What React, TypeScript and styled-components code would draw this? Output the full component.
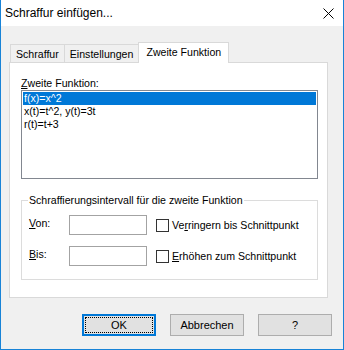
import React from "react";
import styled, { createGlobalStyle } from "styled-components";

const Global = createGlobalStyle`
  html, body { margin: 0; padding: 0; background: #ffffff; }
  * { box-sizing: border-box; }
`;

const Window = styled.div`
  width: 344px;
  height: 350px;
  border: 1px solid #1883d7;
  border-top: none;
  background: #f0f0f0;
  display: flex;
  flex-direction: column;
  font-family: "Liberation Sans", Arial, sans-serif;
  font-size: 10.6px;
  color: #000;
`;

const TitleBar = styled.div`
  height: 26px;
  background: #ffffff;
  display: flex;
  align-items: center;
  justify-content: space-between;
  padding-left: 4px;
  padding-right: 9px;
  flex-shrink: 0;
`;

const Title = styled.span`
  font-size: 12px;
  line-height: 14px;
  margin-top: -1px;
`;

const Body = styled.div`
  flex: 1;
  display: flex;
  flex-direction: column;
  padding-top: 16px;
`;

const TabStrip = styled.div`
  display: flex;
  align-items: flex-end;
  height: 20px;
  margin-left: 9px;
`;

const Tab = styled.div<{ $active?: boolean }>`
  height: ${(p) => (p.$active ? "21px" : "18px")};
  margin-bottom: ${(p) => (p.$active ? "-1px" : "0")};
  margin-left: -1px;
  padding: ${(p) => (p.$active ? "0 7px 2px 7px" : "0 5px")};
  border: 1px solid #d9d9d9;
  border-bottom: none;
  background: ${(p) => (p.$active ? "#ffffff" : "#f0f0f0")};
  display: flex;
  align-items: center;
  position: relative;
  z-index: ${(p) => (p.$active ? 1 : 0)};
  white-space: nowrap;
  &:first-child { margin-left: 0; }
`;

const Panel = styled.div`
  margin-left: 8px;
  width: 319px;
  height: 236px;
  background: #ffffff;
  border: 1px solid #d9d9d9;
  padding: 13px 9px 0 11px;
  display: flex;
  flex-direction: column;
`;

const FieldLabel = styled.div`
  line-height: 14px;
  height: 14px;
`;

const ListBox = styled.div`
  width: 297px;
  height: 89px;
  border: 1px solid #828790;
  background: #fff;
  padding: 1px;
  display: flex;
  flex-direction: column;
`;

const ListItem = styled.div<{ $selected?: boolean }>`
  height: 13px;
  line-height: 13px;
  padding-left: 1px;
  background: ${(p) => (p.$selected ? "#0078d7" : "transparent")};
  color: ${(p) => (p.$selected ? "#ffffff" : "#000000")};
  white-space: nowrap;
`;

const Group = styled.fieldset`
  margin: 15px 0 0 0;
  width: 297px;
  border: 1px solid #dcdcdc;
  padding: 8px 0 13px 7px;
  min-width: 0;
`;

const Legend = styled.legend`
  margin-left: -1px;
  padding: 0 1px;
  line-height: 13px;
  white-space: nowrap;
`;

const GroupGrid = styled.div`
  display: grid;
  grid-template-columns: 40px 78px auto;
  grid-auto-rows: 20px;
  row-gap: 11px;
  align-items: center;
`;

const RowLabel = styled.label`
  line-height: 13px;
  margin-top: -3px;
`;

const TextInput = styled.div`
  width: 78px;
  height: 20px;
  border: 1px solid #a3a3a3;
  background: #fff;
`;

const CheckRow = styled.div`
  display: flex;
  align-items: center;
  margin-left: 9px;
  gap: 3px;
`;

const CheckBox = styled.div`
  width: 13px;
  height: 13px;
  border: 1px solid #333333;
  background: #fff;
`;

const CheckLabel = styled.span`
  line-height: 13px;
  white-space: nowrap;
`;

const ButtonRow = styled.div`
  display: flex;
  justify-content: flex-end;
  gap: 14px;
  margin-top: 16px;
  padding-right: 11px;
`;

const Button = styled.div<{ $default?: boolean }>`
  width: 74px;
  height: 22px;
  display: flex;
  align-items: center;
  justify-content: center;
  background: #e1e1e1;
  border: ${(p) => (p.$default ? "2px solid #0078d7" : "1px solid #adadad")};
  outline: ${(p) => (p.$default ? "1px dotted #000" : "none")};
  outline-offset: -4px;
  font-size: 11px;
  padding-bottom: 1px;
`;

const CloseIcon = () => (
  <svg width="11" height="11" viewBox="0 0 11 11">
    <path d="M0.5 0.5 L10.5 10.5 M10.5 0.5 L0.5 10.5" stroke="#000" strokeWidth="1" fill="none" />
  </svg>
);

export default function App() {
  return (
    <>
      <Global />
      <Window>
        <TitleBar>
          <Title>Schraffur einfügen...</Title>
          <CloseIcon />
        </TitleBar>
        <Body>
          <TabStrip>
            <Tab>Schraffur</Tab>
            <Tab>Einstellungen</Tab>
            <Tab $active>Zweite Funktion</Tab>
          </TabStrip>
          <Panel>
            <FieldLabel>
              <u>Z</u>weite Funktion:
            </FieldLabel>
            <ListBox>
              <ListItem $selected>f(x)=x^2</ListItem>
              <ListItem>x(t)=t^2, y(t)=3t</ListItem>
              <ListItem>r(t)=t+3</ListItem>
            </ListBox>
            <Group>
              <Legend>Schraffierungsintervall für die zweite Funktion</Legend>
              <GroupGrid>
                <RowLabel>
                  <u>V</u>on:
                </RowLabel>
                <TextInput />
                <CheckRow>
                  <CheckBox />
                  <CheckLabel>
                    Ve<u>r</u>ringern bis Schnittpunkt
                  </CheckLabel>
                </CheckRow>
                <RowLabel>
                  <u>B</u>is:
                </RowLabel>
                <TextInput />
                <CheckRow>
                  <CheckBox />
                  <CheckLabel>
                    <u>E</u>rhöhen zum Schnittpunkt
                  </CheckLabel>
                </CheckRow>
              </GroupGrid>
            </Group>
          </Panel>
          <ButtonRow>
            <Button $default>OK</Button>
            <Button>Abbrechen</Button>
            <Button>?</Button>
          </ButtonRow>
        </Body>
      </Window>
    </>
  );
}
